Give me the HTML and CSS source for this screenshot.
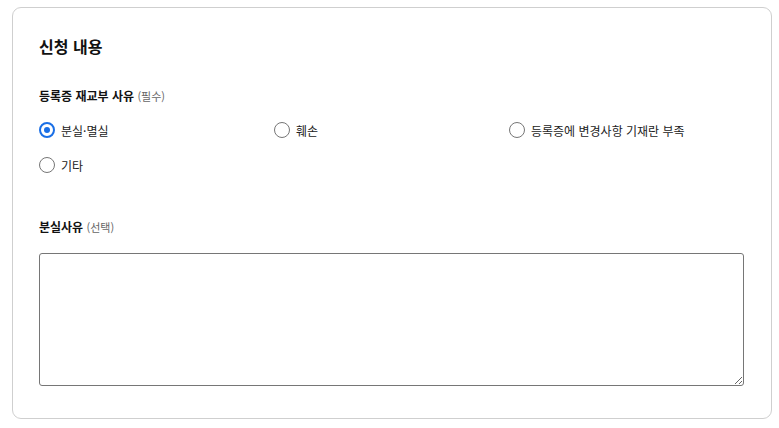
FILE: index.html
```html
<!DOCTYPE html>
<html lang="ko">
<head>
<meta charset="utf-8">
<title>신청 내용</title>
<link rel="stylesheet" href="styles.css">
</head>
<body>
<section class="card">
  <h2 class="card-title">신청 내용</h2>
  <div class="field">
    <div class="field-label">등록증 재교부 사유 <span class="hint">(필수)</span></div>
    <div class="radio-grid">
      <label class="radio"><input type="radio" name="reason" checked><span>분실·멸실</span></label>
      <label class="radio"><input type="radio" name="reason"><span>훼손</span></label>
      <label class="radio"><input type="radio" name="reason"><span>등록증에 변경사항 기재란 부족</span></label>
      <label class="radio"><input type="radio" name="reason"><span>기타</span></label>
    </div>
  </div>
  <div class="field field-text">
    <div class="field-label">분실사유 <span class="hint">(선택)</span></div>
    <textarea class="textarea"></textarea>
  </div>
</section>
</body>
</html>
```
FILE: styles.css
```css
* { box-sizing: border-box; }
html, body { margin: 0; padding: 0; background: #fff; }
body {
  padding: 7px 7px 0 12px;
  font-family: "Noto Sans CJK KR", "Noto Sans", sans-serif;
  color: #111;
}
.card {
  width: 760px;
  border: 1px solid #cfcfcf;
  border-radius: 9px;
  padding: 26px 27px 32px 26px;
}
.card-title {
  margin: 0;
  font-size: 16px;
  line-height: 24px;
  font-weight: 700;
}
.field { margin-top: 28px; }
.field-label {
  font-size: 12px;
  line-height: 20px;
  font-weight: 700;
}
.hint {
  font-size: 11px;
  font-weight: 400;
  color: #666;
}
.radio-grid {
  margin-top: 14px;
  display: grid;
  grid-template-columns: repeat(3, 1fr);
  row-gap: 15px;
}
.radio {
  display: flex;
  align-items: center;
  gap: 6px;
  height: 20px;
  font-size: 12px;
  color: #222;
}
.radio input {
  appearance: none;
  -webkit-appearance: none;
  margin: 0;
  width: 16px;
  height: 16px;
  border: 1px solid #767676;
  border-radius: 50%;
  background: #fff;
  display: grid;
  place-items: center;
}
.radio input:checked {
  border: 2px solid #1a6fe6;
}
.radio input:checked::after {
  content: "";
  width: 6px;
  height: 6px;
  border-radius: 50%;
  background: #1a6fe6;
}
.field-text { margin-top: 42px; }
.textarea {
  display: block;
  margin-top: 16px;
  width: 100%;
  height: 133px;
  border: 1px solid #767676;
  border-radius: 3px;
  padding: 4px;
  font: inherit;
}
```
